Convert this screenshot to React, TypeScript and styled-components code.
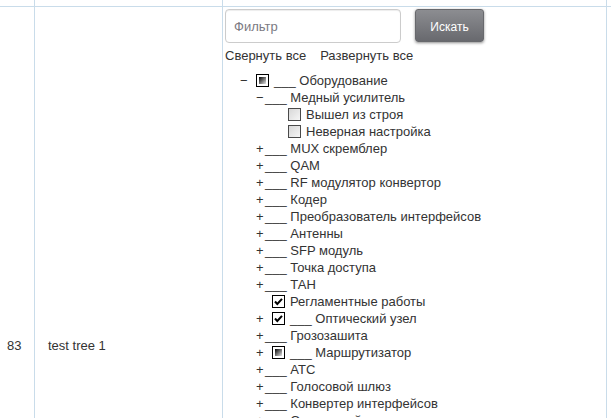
import { useId } from "react";
import styled, { createGlobalStyle } from "styled-components";

type CheckState = "off" | "on" | "part";

interface TreeNode {
  label: string;
  toggle?: "+" | "−";
  check?: CheckState;
  leader?: boolean;
  children?: TreeNode[];
}

const leaf = (label: string, extra: Partial<TreeNode> = {}): TreeNode => ({
  label,
  toggle: "+",
  leader: true,
  ...extra,
});

const equipment: TreeNode = {
  label: "Оборудование",
  toggle: "−",
  check: "part",
  leader: true,
  children: [
    {
      label: "Медный усилитель",
      toggle: "−",
      leader: true,
      children: [
        { label: "Вышел из строя", check: "off" },
        { label: "Неверная настройка", check: "off" },
      ],
    },
    leaf("MUX скремблер"),
    leaf("QAM"),
    leaf("RF модулятор конвертор"),
    leaf("Кодер"),
    leaf("Преобразователь интерфейсов"),
    leaf("Антенны"),
    leaf("SFP модуль"),
    leaf("Точка доступа"),
    leaf("ТАН"),
    { label: "Регламентные работы", check: "on" },
    leaf("Оптический узел", { check: "on" }),
    leaf("Грозозашита"),
    leaf("Маршрутизатор", { check: "part" }),
    leaf("АТС"),
    leaf("Голосовой шлюз"),
    leaf("Конвертер интерфейсов"),
    leaf("Оптический приемник"),
  ],
};

const GlobalStyle = createGlobalStyle`
  html, body {
    margin: 0;
    padding: 0;
    overflow: hidden;
    background: #fff;
  }
  body {
    font-family: "Liberation Sans", Arial, sans-serif;
    font-size: 13px;
    color: #333;
  }
`;

const Grid = styled.table`
  border-collapse: separate;
  border-spacing: 0;
  table-layout: fixed;
  width: 760px;
`;

const Cell = styled.td<{ $width?: number; $padLeft?: number; $height?: number; $top?: boolean }>`
  box-sizing: border-box;
  width: ${(p) => (p.$width ? `${p.$width}px` : "auto")};
  height: ${(p) => (p.$height ? `${p.$height}px` : "auto")};
  padding: ${(p) => (p.$top ? "2px" : "0")} 0 0 ${(p) => p.$padLeft ?? 0}px;
  border-right: 1px solid #c9dcea;
  border-bottom: 1px solid #c9dcea;
  vertical-align: ${(p) => (p.$top ? "top" : "middle")};
  white-space: nowrap;
`;

const SearchBar = styled.div`
  display: flex;
  align-items: flex-start;
  gap: 14px;
`;

const FilterInput = styled.input`
  box-sizing: border-box;
  width: 176px;
  height: 34px;
  padding: 0 8px;
  border: 1px solid #ccc;
  border-radius: 4px;
  box-shadow: inset 0 1px 1px rgba(0, 0, 0, 0.075);
  font: 13px "Liberation Sans", Arial, sans-serif;
  color: #555;
  outline: none;
  &::placeholder {
    color: #7b7a82;
  }
`;

const SearchButton = styled.button`
  box-sizing: border-box;
  width: 69px;
  height: 33px;
  padding: 3px 0 0;
  border: 1px solid #68696d;
  border-radius: 3px;
  background: linear-gradient(#8c8d91, #68696e);
  box-shadow: 0 1px 3px rgba(0, 0, 0, 0.45);
  color: #fff;
  font: 12px "Liberation Sans", Arial, sans-serif;
  cursor: pointer;
`;

const Actions = styled.div`
  display: flex;
  gap: 14px;
  margin-top: 4px;
  line-height: 17px;
`;

const ActionLink = styled.a`
  color: #333;
  text-decoration: none;
  cursor: pointer;
`;

const Tree = styled.div`
  margin-top: 8px;
  padding-left: 15px;
`;

const Row = styled.div<{ $level: number }>`
  height: 17px;
  padding-left: ${(p) => p.$level * 16}px;
  line-height: 17px;
  white-space: nowrap;
`;

const Toggle = styled.span`
  display: inline-block;
  width: 9px;
`;

const BoxSvg = styled.svg`
  vertical-align: -2px;
  margin: 0 5px 0 7px;
`;

function CheckBox({ state }: { state: CheckState }) {
  const id = useId().replace(/:/g, "");
  if (state === "on") {
    return (
      <BoxSvg width="13" height="13" viewBox="0 0 13 13">
        <rect x="0.5" y="0.5" width="12" height="12" fill="#fff" stroke="#000" />
        <path d="M3 6.5 L5.3 9 L10 3.8" fill="none" stroke="#000" strokeWidth="2" />
      </BoxSvg>
    );
  }
  if (state === "part") {
    return (
      <BoxSvg width="13" height="13" viewBox="0 0 13 13">
        <defs>
          <linearGradient id={`p${id}`} x1="0" y1="0" x2="1" y2="1">
            <stop offset="0" stopColor="#000" />
            <stop offset="1" stopColor="#e4e4e4" />
          </linearGradient>
        </defs>
        <rect x="0.5" y="0.5" width="12" height="12" fill="#fff" stroke="#000" />
        <rect x="3" y="3" width="7" height="7" fill={`url(#p${id})`} />
      </BoxSvg>
    );
  }
  return (
    <BoxSvg width="13" height="13" viewBox="0 0 13 13">
      <defs>
        <linearGradient id={`o${id}`} x1="0" y1="0" x2="1" y2="1">
          <stop offset="0" stopColor="#d6d6d6" />
          <stop offset="1" stopColor="#f7f7f7" />
        </linearGradient>
      </defs>
      <rect x="0.5" y="0.5" width="12" height="12" fill={`url(#o${id})`} stroke="#4a4a4a" />
    </BoxSvg>
  );
}

function TreeItem({ node, level }: { node: TreeNode; level: number }) {
  return (
    <>
      <Row $level={level}>
        <Toggle>{node.toggle ?? ""}</Toggle>
        {node.check && <CheckBox state={node.check} />}
        {node.leader && "___ "}
        {node.label}
      </Row>
      {node.children?.map((child) => (
        <TreeItem key={child.label} node={child} level={level + 1} />
      ))}
    </>
  );
}

export default function App() {
  return (
    <>
      <GlobalStyle />
      <Grid>
        <tbody>
          <tr>
            <Cell $width={35} $height={7} />
            <Cell $width={188} $height={7} />
            <Cell $width={384} $height={7} />
            <Cell />
          </tr>
          <tr>
            <Cell $padLeft={7}>83</Cell>
            <Cell $padLeft={13}>test tree 1</Cell>
            <Cell $padLeft={2} $height={678} $top>
              <SearchBar>
                <FilterInput placeholder="Фильтр" />
                <SearchButton>Искать</SearchButton>
              </SearchBar>
              <Actions>
                <ActionLink>Свернуть все</ActionLink>
                <ActionLink>Развернуть все</ActionLink>
              </Actions>
              <Tree>
                <TreeItem node={equipment} level={0} />
              </Tree>
            </Cell>
            <Cell />
          </tr>
        </tbody>
      </Grid>
    </>
  );
}
